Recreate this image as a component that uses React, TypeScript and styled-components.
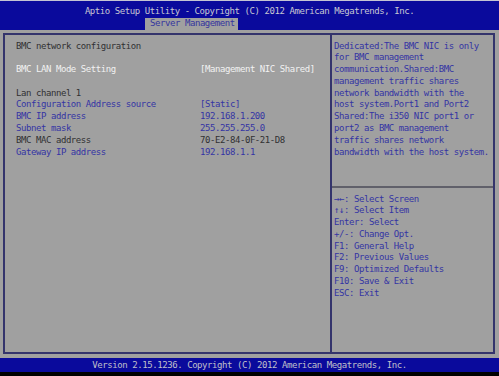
import React from 'react'
import styled, { createGlobalStyle } from 'styled-components'

const GlobalStyle = createGlobalStyle`
  html, body {
    margin: 0;
    padding: 0;
    background: #000;
  }
`

type Tone = 'dark' | 'blue' | 'white'

const toneColor: Record<Tone, string> = {
  dark: '#303032',
  blue: '#3434a4',
  white: '#f2f2f2',
}

type Item = { label: string; value?: string; tone: Tone; valueTone?: Tone } | null

const items: Item[] = [
  { label: 'BMC network configuration', tone: 'dark' },
  null,
  { label: 'BMC LAN Mode Setting', value: '[Management NIC Shared]', tone: 'white', valueTone: 'white' },
  null,
  { label: 'Lan channel 1', tone: 'dark' },
  { label: 'Configuration Address source', value: '[Static]', tone: 'blue', valueTone: 'blue' },
  { label: 'BMC IP address', value: '192.168.1.200', tone: 'blue', valueTone: 'blue' },
  { label: 'Subnet mask', value: '255.255.255.0', tone: 'blue', valueTone: 'blue' },
  { label: 'BMC MAC address', value: '70-E2-84-0F-21-D8', tone: 'dark', valueTone: 'dark' },
  { label: 'Gateway IP address', value: '192.168.1.1', tone: 'blue', valueTone: 'blue' },
]

const helpLines = [
  'Dedicated:The BMC NIC is only',
  'for BMC management',
  'communication.Shared:BMC',
  'management traffic shares',
  'network bandwidth with the',
  'host system.Port1 and Port2',
  'Shared:The i350 NIC port1 or',
  'port2 as BMC management',
  'traffic shares network',
  'bandwidth with the host system.',
]

const keyLines = [
  '\u2192\u2190: Select Screen',
  '\u2191\u2193: Select Item',
  'Enter: Select',
  '+/-: Change Opt.',
  'F1: General Help',
  'F2: Previous Values',
  'F9: Optimized Defaults',
  'F10: Save & Exit',
  'ESC: Exit',
]

const App = () => {
  return (
    <>
      <GlobalStyle />
      <Screen>
        <TopBar>
          <Title>Aptio Setup Utility - Copyright (C) 2012 American Megatrends, Inc.</Title>
          <Tab>Server Management</Tab>
        </TopBar>

        <Body>
          <Frame>
            <MainPanel>
              {items.map((item, index) =>
                item ? (
                  <Row key={index}>
                    <Cell tone={item.tone}>{item.label}</Cell>
                    {item.value && <Cell tone={item.valueTone ?? item.tone}>{item.value}</Cell>}
                  </Row>
                ) : (
                  <Blank key={index} />
                )
              )}
            </MainPanel>

            <SidePanel>
              <HelpBox>
                {helpLines.map((line) => (
                  <Line key={line}>{line}</Line>
                ))}
              </HelpBox>
              <Rule />
              <KeyBox>
                {keyLines.map((line) => (
                  <Line key={line}>{line}</Line>
                ))}
              </KeyBox>
            </SidePanel>
          </Frame>
        </Body>

        <Footer>Version 2.15.1236. Copyright (C) 2012 American Megatrends, Inc.</Footer>
      </Screen>
    </>
  )
}

const Screen = styled.div`
  width: 499px;
  height: 376px;
  display: flex;
  flex-direction: column;
  background: #000;
  font-family: 'DejaVu Sans Mono', 'Liberation Mono', monospace;
  font-size: 9px;
  letter-spacing: -0.43px;
  line-height: 11.8px;
  white-space: pre;
`
const TopBar = styled.header`
  height: 30px;
  box-sizing: border-box;
  border-top: 1px solid #c4c4d4;
  padding-top: 4.5px;
  background: #0a0a9c;
  display: flex;
  flex-direction: column;
`
const Title = styled.div`
  color: #c8c8d2;
  text-align: center;
`
const Tab = styled.div`
  align-self: flex-start;
  margin-top: auto;
  margin-left: 145px;
  height: 12px;
  padding: 0 3px 0 5px;
  line-height: 10px;
  background: #a0a0a0;
  color: #34349e;
`
const Body = styled.main`
  height: 328px;
  box-sizing: border-box;
  padding: 3px 4px 4px 3px;
  background: #a0a0a0;
  display: flex;
`
const Frame = styled.div`
  flex: 1;
  display: flex;
  border: 2px solid #34346c;
`
const MainPanel = styled.section`
  flex: none;
  width: 327px;
  box-sizing: border-box;
  padding: 5.5px 0 0 11px;
  border-right: 2px solid #34346c;
`
const Row = styled.div`
  display: grid;
  grid-template-columns: 184px 1fr;
  height: 11.8px;
`
const Cell = styled.span<{ tone: Tone }>`
  color: ${(p) => toneColor[p.tone]};
`
const Blank = styled.div`
  height: 11.8px;
`
const SidePanel = styled.aside`
  flex: 1;
  display: flex;
  flex-direction: column;
  padding-top: 5.5px;
`
const HelpBox = styled.div`
  height: 145.5px;
  padding-left: 2px;
  color: #3434a4;
`
const Rule = styled.div`
  height: 2px;
  background: #60606a;
`
const KeyBox = styled.div`
  padding: 5.5px 0 0 2px;
  color: #3434a4;
`
const Line = styled.div`
  height: 11.8px;
`
const Footer = styled.footer`
  height: 14px;
  line-height: 14px;
  background: #0a0a9c;
  color: #c0c0ca;
  text-align: center;
`

export default App
